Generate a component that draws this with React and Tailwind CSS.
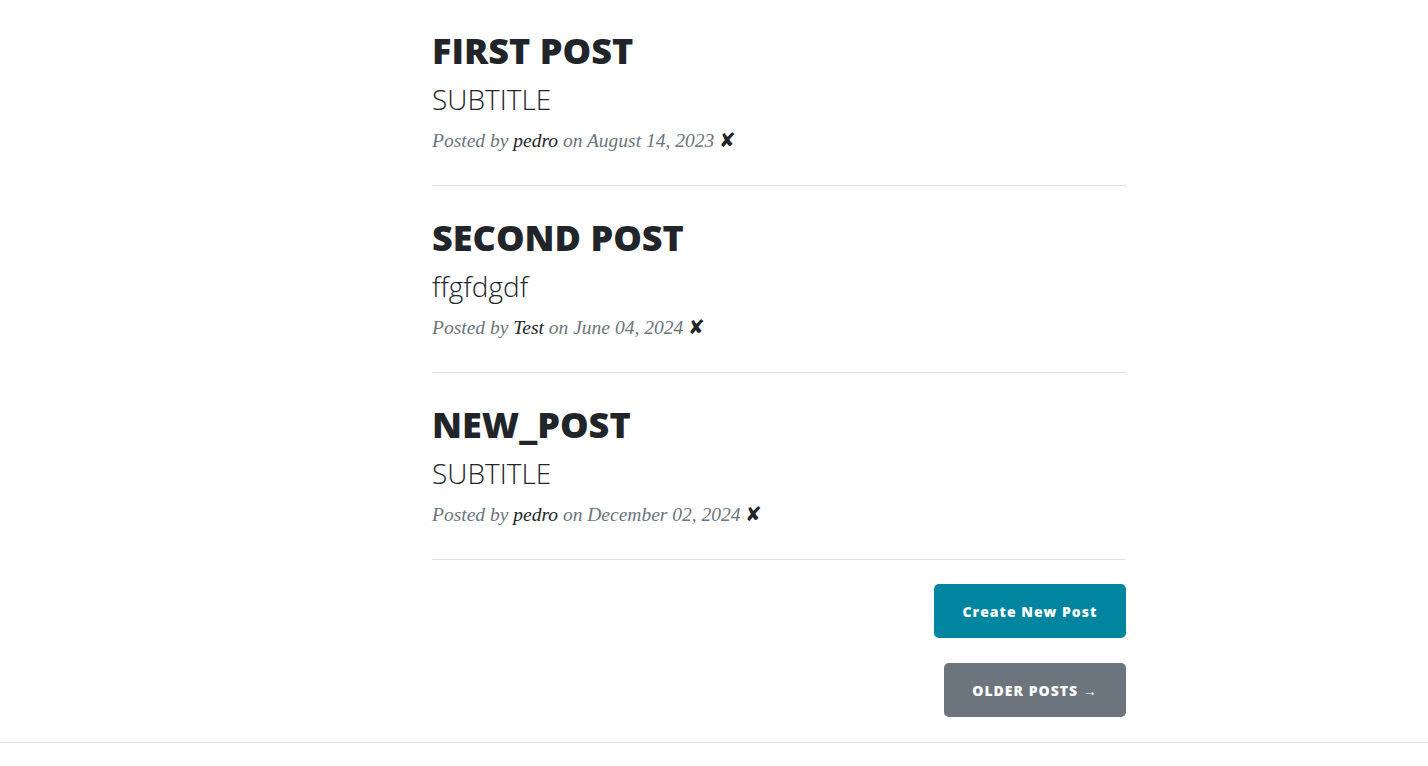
const posts = [
  { title: "FIRST POST", subtitle: "SUBTITLE", author: "pedro", date: "August 14, 2023" },
  { title: "SECOND POST", subtitle: "ffgfdgdf", author: "Test", date: "June 04, 2024" },
  { title: "NEW_POST", subtitle: "SUBTITLE", author: "pedro", date: "December 02, 2024" },
];

const PostPreview = ({ post }) => (
  <div className="flex flex-col">
    <h2 className="mt-[30px] text-[36px] leading-[43px] font-extrabold text-[#212529]">
      {post.title}
    </h2>
    <h3 className="mt-[10px] text-[28px] leading-[34px] font-light text-[#212529]">
      {post.subtitle}
    </h3>
    <p className="mt-[11px] mb-[31px] text-[19.5px] leading-[27px] italic text-[#6c757d] font-['Liberation_Serif',serif]">
      Posted by <span className="text-[#212529]">{post.author}</span> on{" "}
      {post.date} <span className="not-italic text-[#212529]">✘</span>
    </p>
    <hr className="border-0 h-px bg-[#dee2e6]" />
  </div>
);

export default function App() {
  return (
    <div className="min-h-screen bg-white font-['Open_Sans',sans-serif]">
      <div className="ml-[432px] w-[694px] -mt-[1px] flex flex-col">
        {posts.map((post) => (
          <PostPreview key={post.title} post={post} />
        ))}
        <div className="flex flex-col items-end gap-[25px] mt-[24px]">
          <button className="w-[192px] h-[54px] rounded-[5px] bg-[#0085a1] text-white text-[14px] font-extrabold tracking-[1px]">
            Create New Post
          </button>
          <button className="w-[182px] h-[54px] rounded-[5px] bg-[#6c757d] text-white text-[14px] font-extrabold tracking-[1px] uppercase">
            Older Posts →
          </button>
        </div>
      </div>
      <div className="mt-[25px] border-t border-[#dee2e6]" />
    </div>
  );
}
